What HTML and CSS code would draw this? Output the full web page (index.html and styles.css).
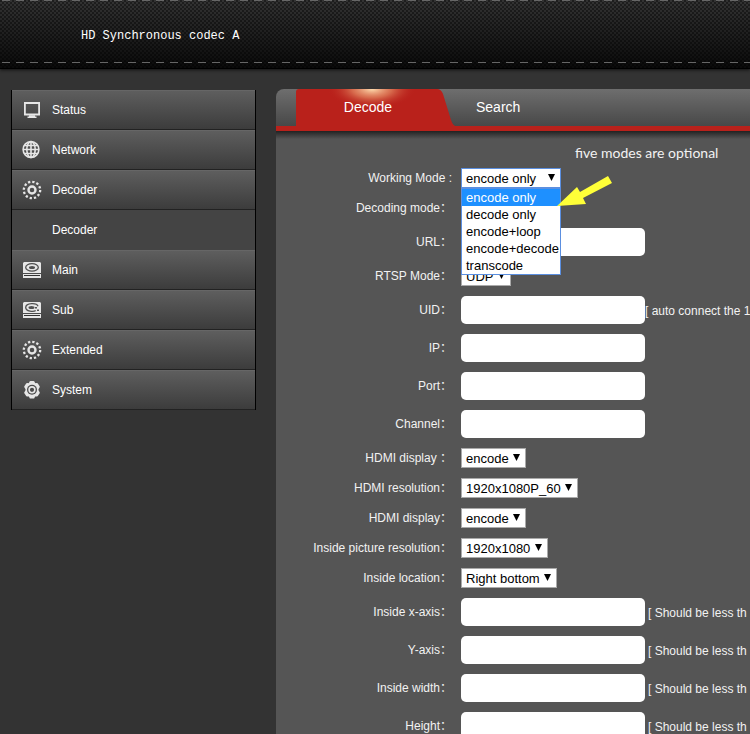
FILE: index.html
```
<!DOCTYPE html>
<html lang="en">
<head>
  <meta charset="UTF-8">
  <title>HD Synchronous codec A</title>
  <link rel="stylesheet" href="styles.css">
</head>
<body>

<header class="header">
  <h1>HD Synchronous codec A</h1>
</header>

<div class="page">
  <nav class="sidebar">
    <a href="#status">
      <svg viewBox="0 0 20 20"><path d="M2.900 3h14.200v11.500H2.900z" fill="none" stroke="#e6e6e6" stroke-width="1.800"/><path d="M7 15.300h6v1.200h1.500V18h-9v-1.500H7z" fill="#e6e6e6"/></svg>
      Status
    </a>
    <a href="#network">
      <svg viewBox="0 0 20 20"><g fill="none" stroke="#e6e6e6" stroke-width="1.600"><circle cx="9" cy="9.500" r="7.900"/><ellipse cx="9" cy="9.500" rx="4.200" ry="7.900"/><path d="M9 1.500v16M1 9.500h16M2.500 5.500h13M2.500 13.500h13"/></g></svg>
      Network
    </a>
    <a href="#decoder">
      <svg viewBox="0 0 20 20"><circle cx="10" cy="10" r="3.500" fill="none" stroke="#e6e6e6" stroke-width="2.400"/><circle cx="10" cy="10" r="8.200" fill="none" stroke="#e6e6e6" stroke-width="2.300" stroke-dasharray="2.300 1.993"/></svg>
      Decoder
    </a>
    <a class="sub" href="#decoder">Decoder</a>
    <a href="#main">
      <svg viewBox="0 0 20 20"><path d="M2 2h16l1 1v10H1V3z" fill="#e6e6e6"/><path d="M1 14h18v4H1z" fill="#e6e6e6"/><path d="M2 15h16v1H2z" fill="#333"/><ellipse cx="10" cy="7.400" rx="6.300" ry="3.700" fill="none" stroke="#505050" stroke-width="1.300"/><ellipse cx="10" cy="7.400" rx="3" ry="1.500" fill="#505050"/></svg>
      Main
    </a>
    <a href="#sub">
      <svg viewBox="0 0 20 20"><path d="M2 2h16l1 1v10H1V3z" fill="#e6e6e6"/><path d="M1 14h18v4H1z" fill="#e6e6e6"/><path d="M2 15h16v1H2z" fill="#333"/><path d="M16 6.200C14.800 2.500 4 2.700 3.700 7.400c0 4 8 4.700 10 3" fill="none" stroke="#505050" stroke-width="1.300"/><ellipse cx="9.500" cy="7.400" rx="3" ry="1.500" fill="#505050"/><path d="M13 7h2v1.500h-2zM15 9.500h2V11h-2z" fill="#505050"/></svg>
      Sub
    </a>
    <a href="#extended">
      <svg viewBox="0 0 20 20"><circle cx="10" cy="10" r="3.500" fill="none" stroke="#e6e6e6" stroke-width="2.400"/><circle cx="10" cy="10" r="8.200" fill="none" stroke="#e6e6e6" stroke-width="2.300" stroke-dasharray="2.300 1.993"/></svg>
      Extended
    </a>
    <a href="#system">
      <svg viewBox="0 0 20 20"><path d="M8.500 2h3l1 2.200 2.500-.200 1.800 2.800L15.500 9v1.500l1.300 2.200-1.800 2.800-2.500-.200-1 2.200h-3l-1-2.200-2.500.200-1.800-2.800L4.500 10.500V9L3.200 6.800 5 4l2.500.200z" fill="#e6e6e6" stroke="#e6e6e6" stroke-width="2" stroke-linejoin="round"/><circle cx="10" cy="9.800" r="5" fill="#4b4b4b"/><circle cx="10" cy="9.800" r="2.900" fill="none" stroke="#e6e6e6" stroke-width="1.600"/></svg>
      System
    </a>
  </nav>

  <main class="content">
    <div class="tabs">
      <a class="tab active" href="#decode">
        <svg class="tab-shape" viewBox="0 0 160 37" preserveAspectRatio="none">
          <defs>
            <radialGradient id="glow" cx="76" cy="0" r="44" gradientUnits="userSpaceOnUse" gradientTransform="scale(1 .45)">
              <stop offset="0" stop-color="#ffdcae"/>
              <stop offset=".45" stop-color="#e48a62" stop-opacity=".7"/>
              <stop offset="1" stop-color="#b9211b" stop-opacity="0"/>
            </radialGradient>
          </defs>
          <path d="M0 37V3Q0 0 3 0H141Q145 0 147 5L155 31Q157 37 160 37Z" fill="#b9211b"/>
          <path d="M20 0H130V26H20Z" fill="url(#glow)"/>
        </svg>
        <span>Decode</span>
      </a>
      <a class="tab" href="#search">Search</a>
    </div>

    <form class="panel">
      <p class="note">five modes are optional</p>

      <div class="row">
        <label for="mode">Working Mode :</label>
        <div class="dropdown">
          <select id="mode" class="open"><option>encode only</option></select>
          <ul class="menu">
            <li class="selected">encode only</li>
            <li>decode only</li>
            <li>encode+loop</li>
            <li>encode+decode</li>
            <li>transcode</li>
          </ul>
          <svg class="pointer" viewBox="0 0 56 32"><path d="M0 31L20 12l3 5L51 1l4 7-29 15 3 6z" fill="#ffff38"/></svg>
        </div>
      </div>
      <div class="row">
        <label for="decoding">Decoding mode：</label>
        <select id="decoding"></select>
      </div>
      <div class="row">
        <label for="url">URL：</label>
        <input type="text" id="url">
      </div>
      <div class="row">
        <label for="rtsp">RTSP Mode：</label>
        <select id="rtsp"><option>UDP</option></select>
      </div>
      <div class="row">
        <label for="uid">UID：</label>
        <input type="text" id="uid">
        <span class="hint">[ auto connect the 1</span>
      </div>
      <div class="row">
        <label for="ip">IP：</label>
        <input type="text" id="ip">
      </div>
      <div class="row">
        <label for="port">Port：</label>
        <input type="text" id="port">
      </div>
      <div class="row">
        <label for="channel">Channel：</label>
        <input type="text" id="channel">
      </div>
      <div class="row">
        <label for="display1">HDMI display ：</label>
        <select id="display1"><option>encode</option></select>
      </div>
      <div class="row">
        <label for="resolution">HDMI resolution：</label>
        <select id="resolution"><option>1920x1080P_60</option></select>
      </div>
      <div class="row">
        <label for="display2">HDMI display：</label>
        <select id="display2"><option>encode</option></select>
      </div>
      <div class="row">
        <label for="inside">Inside picture resolution：</label>
        <select id="inside"><option>1920x1080</option></select>
      </div>
      <div class="row">
        <label for="location">Inside location：</label>
        <select id="location"><option>Right bottom</option></select>
      </div>
      <div class="row">
        <label for="xaxis">Inside x-axis：</label>
        <input type="text" id="xaxis">
        <span class="hint spaced">[ Should be less th</span>
      </div>
      <div class="row">
        <label for="yaxis">Y-axis：</label>
        <input type="text" id="yaxis">
        <span class="hint spaced">[ Should be less th</span>
      </div>
      <div class="row">
        <label for="width">Inside width：</label>
        <input type="text" id="width">
        <span class="hint spaced">[ Should be less th</span>
      </div>
      <div class="row">
        <label for="height">Height：</label>
        <input type="text" id="height">
        <span class="hint spaced">[ Should be less th</span>
      </div>
    </form>
  </main>
</div>

</body>
</html>
```
FILE: styles.css
```
* { box-sizing: border-box; }
body {
  margin: 0;
  height: 100vh;
  overflow: hidden;
  background: #333;
  color: #f2f2f2;
  font: 12px "Liberation Sans", "Noto Sans CJK SC", sans-serif;
}
a {
  color: #fff;
  text-decoration: none;
}

/* carbon header with stitched edges */
.header {
  height: 69px;
  padding: 28px 81px;
  background:
    repeating-linear-gradient(90deg, transparent 0 2px, #666 2px 10px, transparent 10px 14px) 0 0 / 100% 1px no-repeat,
    repeating-linear-gradient(90deg, transparent 0 2px, #666 2px 10px, transparent 10px 14px) 0 62px / 100% 1px no-repeat,
    linear-gradient(rgba(0, 0, 0, 0), rgba(0, 0, 0, 0.8)),
    conic-gradient(#333 25%, #1e1e1e 0 50%, #333 0 75%, #1e1e1e 0) 0 0 / 4px 4px;
  border-bottom: 1px solid #000;
  box-shadow: 0 1px 3px #111;
}
.header h1 {
  margin: 0;
  color: #fff;
  font: 12px/16px "Liberation Mono", monospace;
}

.page {
  display: flex;
  align-items: flex-start;
  gap: 20px;
  padding: 20px 0 0 11px;
}

.sidebar {
  flex: 0 0 245px;
  margin-top: 1px;
  border: 1px solid #000;
  border-width: 0 1px;
}
.sidebar a {
  display: flex;
  align-items: center;
  gap: 10px;
  height: 40px;
  padding-left: 10px;
  background: linear-gradient(#5e5e5e, #3c3c3c);
  border-top: 1px solid #666;
  border-bottom: 1px solid #222;
}
.sidebar svg {
  width: 20px;
  height: 20px;
}
.sidebar .sub {
  padding-left: 40px;
  background: #444;
  border-color: #444;
}

.content {
  flex: 1;
  min-width: 0;
}
.tabs {
  display: flex;
  height: 42px;
  padding-left: 20px;
  background: linear-gradient(#6e6e6e, #484848);
  border-bottom: 5px solid #b9211b;
  border-top-left-radius: 8px;
}
.tab {
  position: relative;
  padding: 0 20px;
  font-size: 14px;
  line-height: 36px;
}
.active {
  width: 160px;
  padding: 0 16px 0 0;
  text-align: center;
}
.active span { position: relative; }
.tab-shape {
  position: absolute;
  left: 0;
  top: 0;
  width: 100%;
  height: 37px;
}

.panel {
  display: flex;
  flex-direction: column;
  gap: 10px;
  padding: 12px 0 10px;
  background: linear-gradient(#222, #555 8px);
}
.note {
  margin: 0 0 -5px 299px;
  font: 14px/20px Lato, sans-serif;
}
.row {
  display: flex;
  align-items: center;
  white-space: nowrap;
}
.row label {
  flex: 0 0 176px;
  margin-right: 9px;
  line-height: 20px;
  text-align: right;
}
input {
  flex: none;
  width: 184px;
  height: 28px;
  padding: 0 8px;
  border: 0;
  border-radius: 5px;
  background: #fff;
}
select {
  height: 20px;
  padding: 0 16px 0 4px;
  appearance: none;
  border: 1px solid #aaa;
  border-radius: 0;
  background: #fff url("data:image/svg+xml,%3Csvg xmlns='http://www.w3.org/2000/svg' width='7' height='7'%3E%3Cpath d='M0 0h7L3.5 7z'/%3E%3C/svg%3E") right 5px top 5px no-repeat;
  color: #000;
  font: 13px "Liberation Sans", sans-serif;
}
.hint {
  padding-top: 2px;
}
.spaced { margin-left: 3px; }

.dropdown {
  position: relative;
  height: 20px;
}
.dropdown select { width: 100px; }
.open { border-color: #5b8fe0; }
.menu {
  position: absolute;
  z-index: 1;
  top: 20px;
  left: 0;
  width: 100px;
  margin: 0;
  padding: 0;
  list-style: none;
  background: #fff;
  border: 1px solid #5b8fe0;
  color: #000;
  font-size: 13px;
  line-height: 17px;
}
.menu li { padding-left: 4px; }
.menu .selected {
  background: #1e90ff;
  color: #fff;
}
.pointer {
  position: absolute;
  z-index: 2;
  top: 7px;
  left: 96px;
  width: 56px;
  height: 32px;
}
```
